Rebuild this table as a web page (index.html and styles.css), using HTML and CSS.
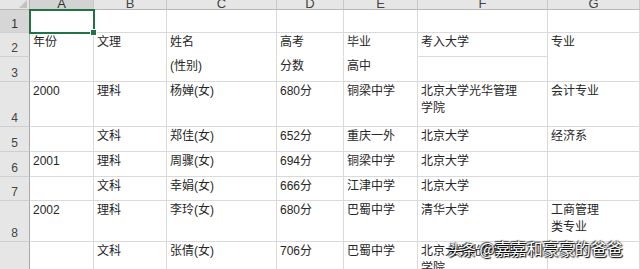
FILE: index.html
```html
<!DOCTYPE html>
<html lang="zh-CN">
<head>
<meta charset="utf-8">
<title>Sheet</title>
<link rel="stylesheet" href="styles.css">
</head>
<body>
<div class="sheet">
  <div class="corner"></div>
  <div class="ch sel">A</div>
  <div class="ch">B</div>
  <div class="ch">C</div>
  <div class="ch">D</div>
  <div class="ch">E</div>
  <div class="ch">F</div>
  <div class="ch">G</div>

  <div class="rh sel">1</div>
  <div class="c active"></div>
  <div class="c"></div>
  <div class="c"></div>
  <div class="c"></div>
  <div class="c"></div>
  <div class="c"></div>
  <div class="c"></div>

  <div class="rh">2</div>
  <div class="c span2">年份</div>
  <div class="c span2">文理</div>
  <div class="c nb">姓名</div>
  <div class="c nb">高考</div>
  <div class="c nb">毕业</div>
  <div class="c">考入大学</div>
  <div class="c span2">专业</div>

  <div class="rh">3</div>
  <div class="c">(性别)</div>
  <div class="c">分数</div>
  <div class="c">高中</div>
  <div class="c"></div>

  <div class="rh">4</div>
  <div class="c">2000</div>
  <div class="c">理科</div>
  <div class="c">杨婵(女)</div>
  <div class="c">680分</div>
  <div class="c">铜梁中学</div>
  <div class="c">北京大学光华管理<br>学院</div>
  <div class="c">会计专业</div>

  <div class="rh">5</div>
  <div class="c"></div>
  <div class="c">文科</div>
  <div class="c">郑佳(女)</div>
  <div class="c">652分</div>
  <div class="c">重庆一外</div>
  <div class="c">北京大学</div>
  <div class="c">经济系</div>

  <div class="rh">6</div>
  <div class="c">2001</div>
  <div class="c">理科</div>
  <div class="c">周骤(女)</div>
  <div class="c">694分</div>
  <div class="c">铜梁中学</div>
  <div class="c">北京大学</div>
  <div class="c"></div>

  <div class="rh">7</div>
  <div class="c"></div>
  <div class="c">文科</div>
  <div class="c">幸娟(女)</div>
  <div class="c">666分</div>
  <div class="c">江津中学</div>
  <div class="c">北京大学</div>
  <div class="c"></div>

  <div class="rh">8</div>
  <div class="c">2002</div>
  <div class="c">理科</div>
  <div class="c">李玲(女)</div>
  <div class="c">680分</div>
  <div class="c">巴蜀中学</div>
  <div class="c">清华大学</div>
  <div class="c">工商管理<br>类专业</div>

  <div class="rh"></div>
  <div class="c"></div>
  <div class="c">文科</div>
  <div class="c">张倩(女)</div>
  <div class="c">706分</div>
  <div class="c">巴蜀中学</div>
  <div class="c">北京大学光华管理<br>学院</div>
  <div class="c"></div>

  <div class="watermark"><span class="wm-logo">头条</span> @嘉嘉和豪豪的爸爸</div>
</div>
</body>
</html>
```

FILE: styles.css
```css
html, body {
  margin: 0;
  padding: 0;
  background: #ffffff;
  overflow: hidden;
}

.sheet {
  position: relative;
  display: grid;
  grid-template-columns: 30px 64px 73px 110px 67px 74px 130px 92px;
  grid-template-rows: 10px 23px 24px 25px 45px 25px 25px 24px 41px 40px;
  font-family: "Liberation Sans", "Noto Sans CJK SC", sans-serif;
  font-size: 12px;
  color: #262626;
  width: 640px;
}

.corner {
  background: #e6e6e6;
  border-right: 1px solid #b8b8b8;
  border-bottom: 1px solid #b8b8b8;
  display: flex;
  justify-content: flex-end;
  align-items: flex-end;
  padding: 0 2px 1px 0;
  box-sizing: border-box;
}

.corner::after {
  content: "";
  width: 0;
  height: 0;
  border-left: 8px solid transparent;
  border-bottom: 8px solid #c2c2c2;
}

.ch {
  background: #e6e6e6;
  border-right: 1px solid #c8c8c8;
  border-bottom: 1px solid #b8b8b8;
  box-sizing: border-box;
  display: flex;
  justify-content: center;
  align-items: flex-end;
  overflow: hidden;
  font-size: 13px;
  line-height: 10px;
  color: #444444;
}

.ch.sel {
  background: #d3d3d3;
  color: #333333;
}

.rh {
  background: #e6e6e6;
  border-right: 1px solid #a8a8a8;
  border-bottom: 1px solid #cfcfcf;
  box-sizing: border-box;
  display: flex;
  justify-content: center;
  align-items: flex-end;
  padding-bottom: 1px;
  line-height: 14px;
  font-size: 12px;
  color: #444444;
}

.rh.sel {
  background: #d6d6d6;
  color: #333333;
}

.c {
  border-right: 1px solid #dadada;
  border-bottom: 1px solid #dadada;
  box-sizing: border-box;
  padding: 1px 3px 0;
  line-height: 17px;
  white-space: nowrap;
  overflow: visible;
  min-width: 0;
}

.c.span2 {
  grid-row: span 2;
}

.c.nb {
  border-bottom-color: transparent;
}

.c.active {
  position: relative;
  outline: 2px solid #217346;
  outline-offset: -1px;
}

.c.active::after {
  content: "";
  position: absolute;
  right: -4px;
  bottom: -4px;
  width: 5px;
  height: 5px;
  background: #217346;
  border: 1px solid #ffffff;
}

.watermark {
  position: absolute;
  left: 448px;
  top: 237px;
  font-family: "Noto Sans CJK SC", sans-serif;
  font-size: 16px;
  line-height: 22px;
  color: #ffffff;
  white-space: nowrap;
  text-shadow: 0 0 2px #000000, 1px 1px 1px #000000, -1px -1px 1px rgba(0, 0, 0, 0.6);
}

.wm-logo {
  font-size: 14px;
}
```
